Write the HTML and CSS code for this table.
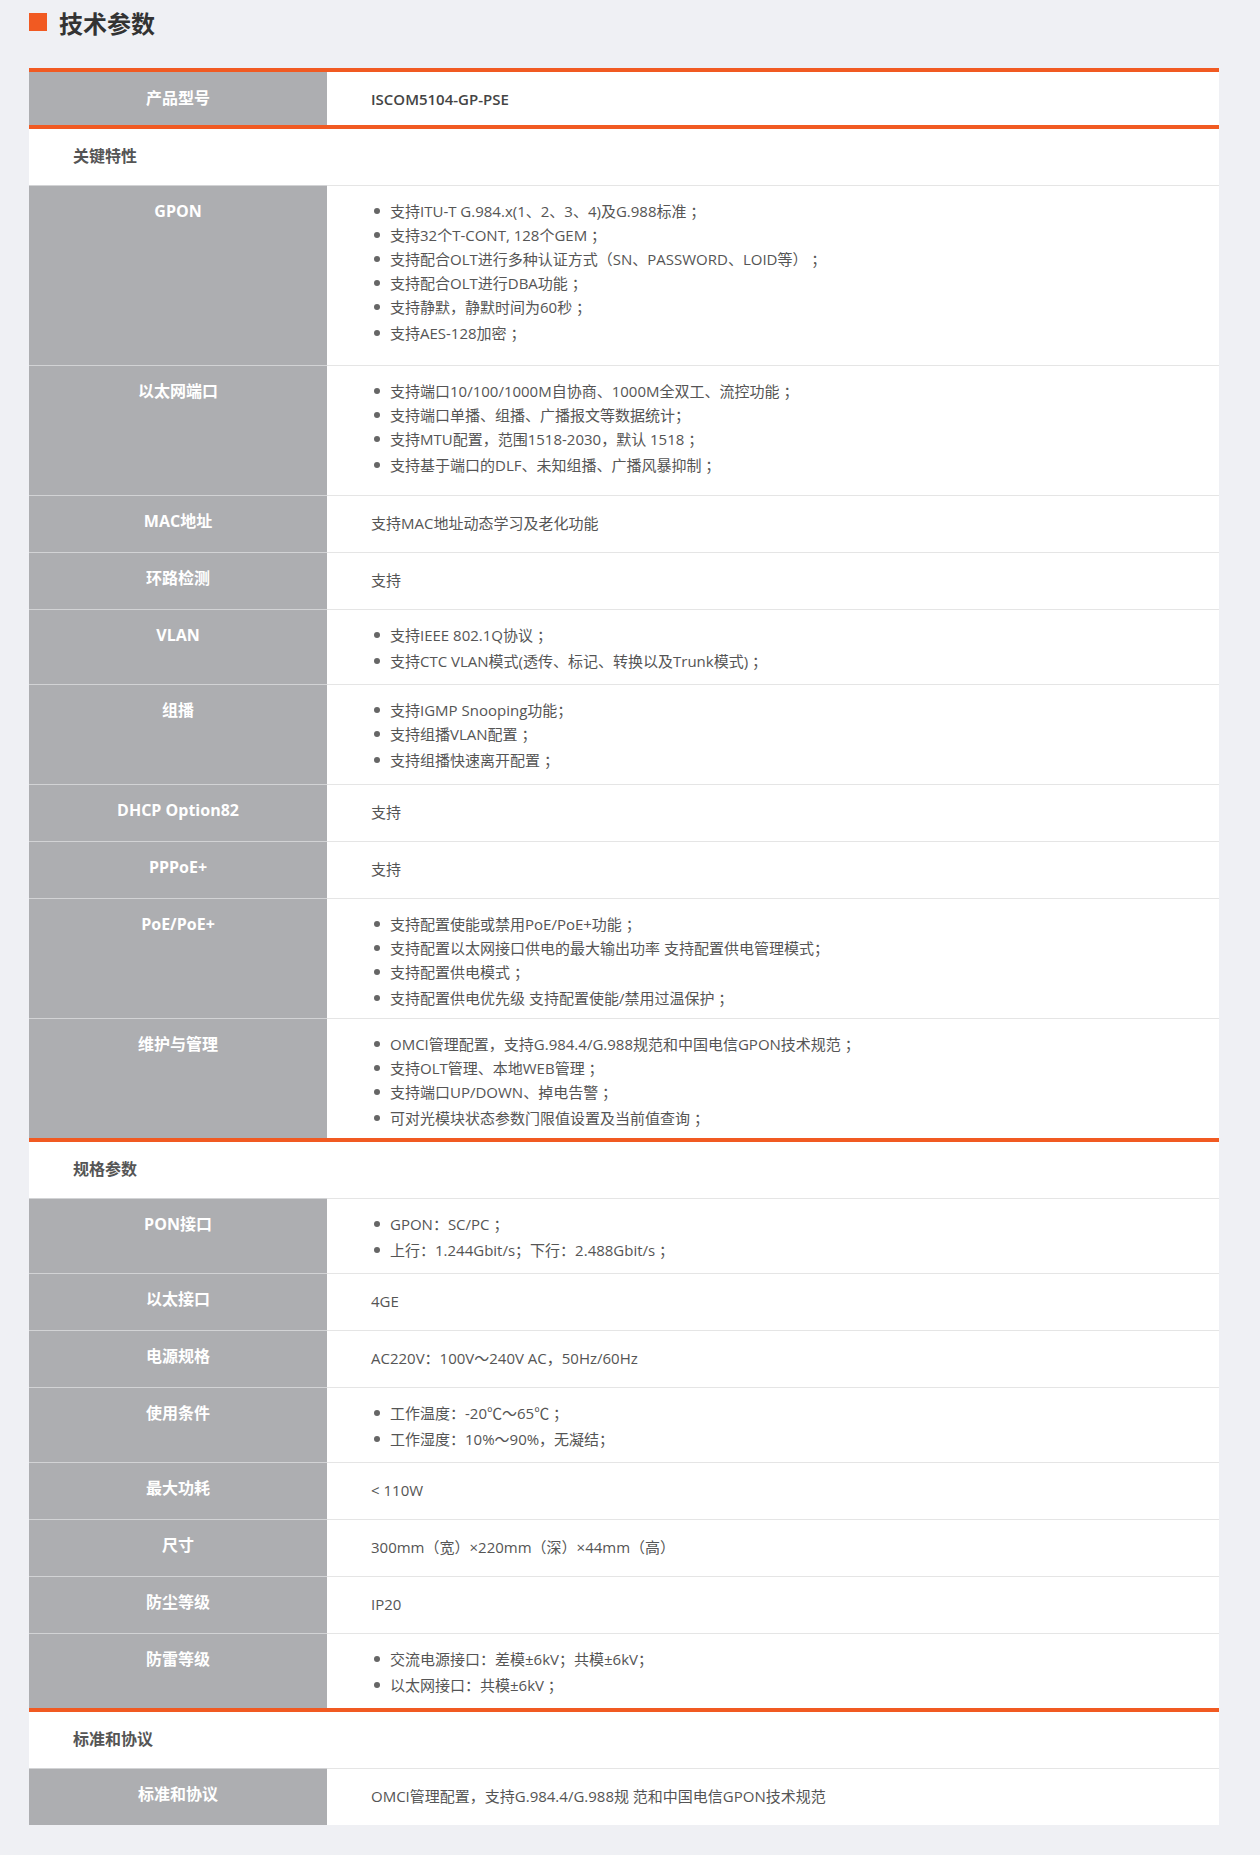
FILE: index.html
```html
<!DOCTYPE html>
<html lang="zh-CN">
<head>
<meta charset="utf-8">
<title>技术参数</title>
<link rel="stylesheet" href="styles.css">
</head>
<body>
<div class="page">
  <h2 class="title"><span class="title-mark"></span>技术参数</h2>
  <div class="spec">
    <div class="row head">
      <div class="label">产品型号</div>
      <div class="value model">ISCOM5104-GP-PSE</div>
    </div>

    <div class="group">
      <div class="group-title">关键特性</div>
      <div class="row">
        <div class="label">GPON</div>
        <div class="value pb-l">
          <ul class="list">
            <li>支持ITU-T G.984.x(1、2、3、4)及G.988标准 ；</li>
            <li>支持32个T-CONT, 128个GEM ；</li>
            <li>支持配合OLT进行多种认证方式（SN、PASSWORD、LOID等） ；</li>
            <li>支持配合OLT进行DBA功能 ；</li>
            <li>支持静默，静默时间为60秒 ；</li>
            <li>支持AES-128加密 ；</li>
          </ul>
        </div>
      </div>
      <div class="row">
        <div class="label">以太网端口</div>
        <div class="value pb-m">
          <ul class="list">
            <li>支持端口10/100/1000M自协商、1000M全双工、流控功能 ；</li>
            <li>支持端口单播、组播、广播报文等数据统计；</li>
            <li>支持MTU配置，范围1518-2030，默认 1518 ；</li>
            <li>支持基于端口的DLF、未知组播、广播风暴抑制 ；</li>
          </ul>
        </div>
      </div>
      <div class="row">
        <div class="label">MAC地址</div>
        <div class="value single">支持MAC地址动态学习及老化功能</div>
      </div>
      <div class="row">
        <div class="label">环路检测</div>
        <div class="value single">支持</div>
      </div>
      <div class="row">
        <div class="label">VLAN</div>
        <div class="value">
          <ul class="list">
            <li>支持IEEE 802.1Q协议 ；</li>
            <li>支持CTC VLAN模式(透传、标记、转换以及Trunk模式) ；</li>
          </ul>
        </div>
      </div>
      <div class="row">
        <div class="label">组播</div>
        <div class="value pb-n">
          <ul class="list">
            <li>支持IGMP Snooping功能；</li>
            <li>支持组播VLAN配置 ；</li>
            <li>支持组播快速离开配置 ；</li>
          </ul>
        </div>
      </div>
      <div class="row">
        <div class="label">DHCP Option82</div>
        <div class="value single">支持</div>
      </div>
      <div class="row">
        <div class="label">PPPoE+</div>
        <div class="value single">支持</div>
      </div>
      <div class="row">
        <div class="label">PoE/PoE+</div>
        <div class="value pb-s">
          <ul class="list">
            <li>支持配置使能或禁用PoE/PoE+功能 ；</li>
            <li>支持配置以太网接口供电的最大输出功率 支持配置供电管理模式；</li>
            <li>支持配置供电模式 ；</li>
            <li>支持配置供电优先级 支持配置使能/禁用过温保护 ；</li>
          </ul>
        </div>
      </div>
      <div class="row">
        <div class="label">维护与管理</div>
        <div class="value pb-s">
          <ul class="list">
            <li>OMCI管理配置，支持G.984.4/G.988规范和中国电信GPON技术规范 ；</li>
            <li>支持OLT管理、本地WEB管理 ；</li>
            <li>支持端口UP/DOWN、掉电告警 ；</li>
            <li>可对光模块状态参数门限值设置及当前值查询 ；</li>
          </ul>
        </div>
      </div>
    </div>

    <div class="group">
      <div class="group-title">规格参数</div>
      <div class="row">
        <div class="label">PON接口</div>
        <div class="value">
          <ul class="list">
            <li>GPON：SC/PC ；</li>
            <li>上行：1.244Gbit/s；下行：2.488Gbit/s ；</li>
          </ul>
        </div>
      </div>
      <div class="row">
        <div class="label">以太接口</div>
        <div class="value single">4GE</div>
      </div>
      <div class="row">
        <div class="label">电源规格</div>
        <div class="value single">AC220V：100V～240V AC，50Hz/60Hz</div>
      </div>
      <div class="row">
        <div class="label">使用条件</div>
        <div class="value">
          <ul class="list">
            <li>工作温度：-20℃～65℃ ；</li>
            <li>工作湿度：10%～90%，无凝结；</li>
          </ul>
        </div>
      </div>
      <div class="row">
        <div class="label">最大功耗</div>
        <div class="value single">&lt; 110W</div>
      </div>
      <div class="row">
        <div class="label">尺寸</div>
        <div class="value single">300mm（宽）×220mm（深）×44mm（高）</div>
      </div>
      <div class="row">
        <div class="label">防尘等级</div>
        <div class="value single">IP20</div>
      </div>
      <div class="row">
        <div class="label">防雷等级</div>
        <div class="value">
          <ul class="list">
            <li>交流电源接口：差模±6kV；共模±6kV；</li>
            <li>以太网接口：共模±6kV ；</li>
          </ul>
        </div>
      </div>
    </div>

    <div class="group">
      <div class="group-title">标准和协议</div>
      <div class="row">
        <div class="label">标准和协议</div>
        <div class="value single">OMCI管理配置，支持G.984.4/G.988规 范和中国电信GPON技术规范</div>
      </div>
    </div>
  </div>
</div>
</body>
</html>
```

FILE: styles.css
```css
html, body {
  margin: 0;
  padding: 0;
}

body {
  background: #eff0f4;
  font-family: "Open Sans", "Noto Sans CJK SC", sans-serif;
  color: #555;
}

.page {
  padding: 0 41px 30px 29px;
}

.title {
  display: flex;
  align-items: center;
  gap: 12px;
  height: 46px;
  margin: 0 0 22px 0;
  padding-bottom: 2px;
  box-sizing: border-box;
  font-size: 24px;
  font-weight: bold;
  color: #333;
  font-family: "Noto Sans CJK SC", sans-serif;
}

.title-mark {
  display: block;
  width: 18px;
  height: 18px;
  background: #f15a22;
}

.spec {
  border-top: 4px solid #f15a22;
  background: #fff;
}

.group {
  border-top: 4px solid #f15a22;
}

.group-title {
  height: 56px;
  box-sizing: border-box;
  display: flex;
  align-items: center;
  padding-left: 44px;
  padding-bottom: 4px;
  font-size: 16px;
  font-weight: bold;
  color: #555;
  font-family: "Noto Sans CJK SC", sans-serif;
}

.row {
  display: flex;
}

.label {
  flex: 0 0 298px;
  box-sizing: border-box;
  background: #adaeb1;
  border-top: 1px solid #d2d3d5;
  color: #fff;
  font-size: 16px;
  font-weight: bold;
  line-height: 24px;
  text-align: center;
  padding-top: 13px;
  padding-bottom: 19px;
}

.value {
  flex: 1;
  border-top: 1px solid #e5e5e5;
  font-size: 15px;
  line-height: 24px;
  color: #555;
  padding: 13px 44px 11px 44px;
}

.value.single {
  padding-top: 15px;
  padding-bottom: 17px;
}

.value.pb-s { padding-bottom: 8px; }
.value.pb-n { padding-bottom: 12px; }
.value.pb-m { padding-bottom: 18px; }
.value.pb-l { padding-bottom: 20px; }

.row.head .label {
  border-top: none;
  height: 53px;
  padding: 0 0 2px 0;
  display: flex;
  align-items: center;
  justify-content: center;
}

.row.head .value {
  border-top: none;
  height: 53px;
  box-sizing: border-box;
  padding: 0 44px;
  display: flex;
  align-items: center;
}

.value.model {
  font-weight: 600;
  color: #444;
}

.list {
  list-style: none;
  margin: 0;
  padding: 0;
}

.list li {
  position: relative;
  padding-left: 19px;
}

.list li:last-child {
  margin-top: 2px;
}

.list li::before {
  content: "";
  position: absolute;
  left: 3px;
  top: 9px;
  width: 6px;
  height: 6px;
  border-radius: 50%;
  background: #666;
}
```
